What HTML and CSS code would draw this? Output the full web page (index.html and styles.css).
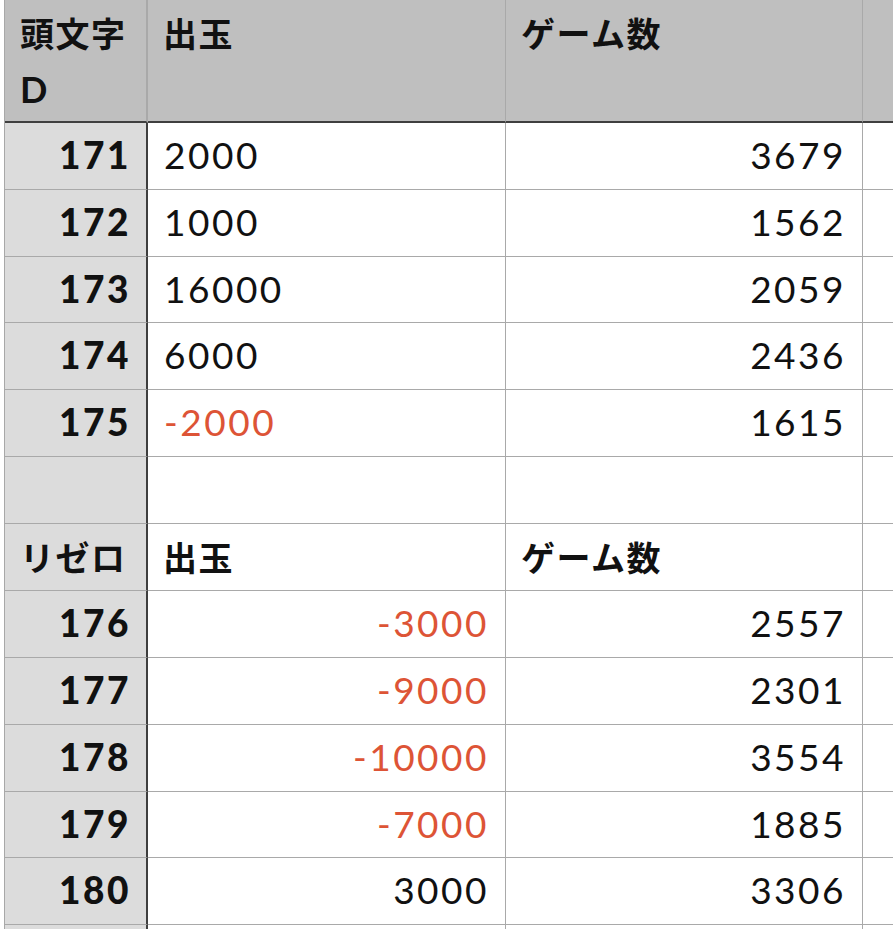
FILE: index.html
```html
<!DOCTYPE html>
<html lang="ja">
<head>
<meta charset="utf-8">
<title>Sheet</title>
<link rel="stylesheet" href="styles.css">
</head>
<body>
<div class="sheet">
  <div class="c rh hd hl">頭文字<br><span class="lat">D</span></div>
  <div class="c hd">出玉</div>
  <div class="c hd">ゲーム数</div>
  <div class="c hd"></div>

  <div class="c rh">171</div><div class="c">2000</div><div class="c num">3679</div><div class="c"></div>
  <div class="c rh">172</div><div class="c">1000</div><div class="c num">1562</div><div class="c"></div>
  <div class="c rh">173</div><div class="c">16000</div><div class="c num">2059</div><div class="c"></div>
  <div class="c rh">174</div><div class="c">6000</div><div class="c num">2436</div><div class="c"></div>
  <div class="c rh">175</div><div class="c neg">-2000</div><div class="c num">1615</div><div class="c"></div>
  <div class="c rh"></div><div class="c"></div><div class="c"></div><div class="c"></div>
  <div class="c rh lbl">リゼロ</div><div class="c lbl">出玉</div><div class="c lbl">ゲーム数</div><div class="c"></div>
  <div class="c rh">176</div><div class="c num neg">-3000</div><div class="c num">2557</div><div class="c"></div>
  <div class="c rh">177</div><div class="c num neg">-9000</div><div class="c num">2301</div><div class="c"></div>
  <div class="c rh">178</div><div class="c num neg">-10000</div><div class="c num">3554</div><div class="c"></div>
  <div class="c rh">179</div><div class="c num neg">-7000</div><div class="c num">1885</div><div class="c"></div>
  <div class="c rh">180</div><div class="c num">3000</div><div class="c num">3306</div><div class="c"></div>
  <div class="c rh"></div><div class="c"></div><div class="c"></div><div class="c"></div>
</div>
</body>
</html>
```
FILE: styles.css
```css
html, body {
  margin: 0;
  padding: 0;
  background: #ffffff;
  overflow: hidden;
}
body {
  width: 893px;
  height: 929px;
}
.sheet {
  margin-left: 4px;
  border-left: 1px solid #a8a8a8;
  display: grid;
  grid-template-columns: 143px 358px 357px 60px;
  grid-template-rows: 123px 67px 67px 66px 67px 67px 67px 67px 67px 67px 67px 66px 67px 67px;
  font-family: Lato, "Noto Sans CJK JP", sans-serif;
  color: #111;
}
.c {
  box-sizing: border-box;
  border-right: 1px solid #a9a9a9;
  border-bottom: 1px solid #a9a9a9;
  display: flex;
  align-items: center;
  padding: 0 16px 3px;
  font-size: 37px;
  letter-spacing: 2.5px;
  white-space: nowrap;
  background: #ffffff;
}
.num {
  justify-content: flex-end;
}
.neg {
  color: #dd5436;
}
.rh {
  background: #dcdcdc;
  border-right: 2px solid #3f3f3f;
  justify-content: flex-end;
  font-weight: 900;
  padding-right: 15px;
}
.hd {
  background: #bfbfbf;
  border-bottom: 2px solid #3f3f3f;
  align-items: flex-start;
  justify-content: flex-start;
  font-family: "Noto Sans CJK JP", sans-serif;
  font-weight: 700;
  font-size: 34px;
  letter-spacing: 1.5px;
  line-height: 56px;
  padding: 5px 15px 0;
  white-space: normal;
}
.hl {
  border-right: 2px solid #a9a9a9;
  display: block;
}
.lat {
  font-family: Lato, sans-serif;
  font-weight: 700;
  font-size: 36px;
  letter-spacing: 0;
}
.lbl {
  justify-content: flex-start;
  font-family: "Noto Sans CJK JP", sans-serif;
  font-weight: 700;
  font-size: 34px;
  letter-spacing: 1.5px;
  padding: 0 15px 1px;
}
```
